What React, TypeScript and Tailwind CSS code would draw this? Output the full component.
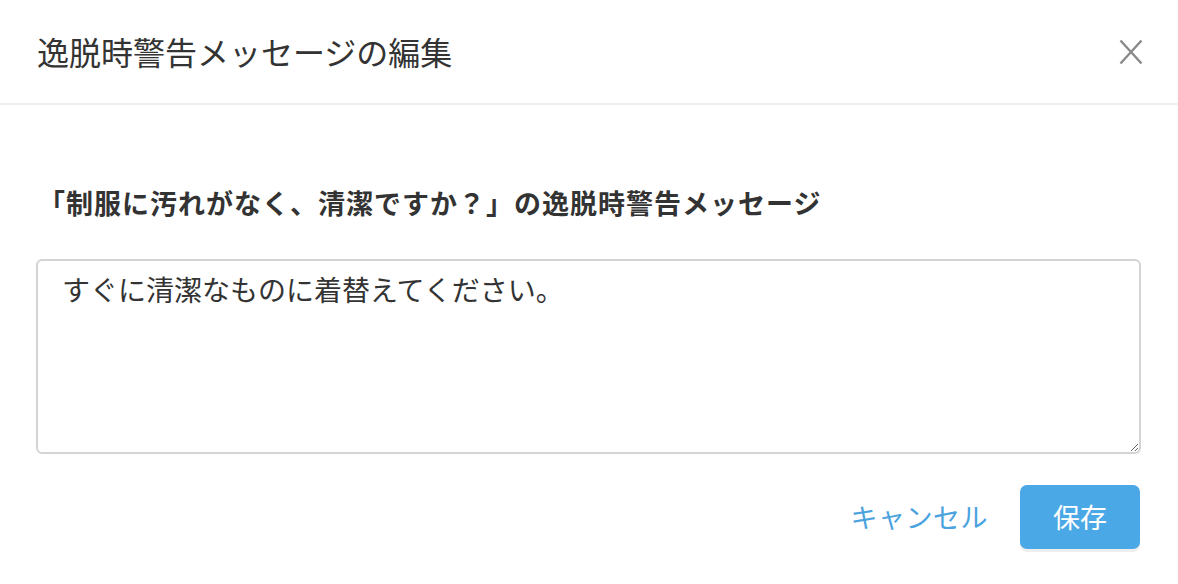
import React from "react";

export default function App() {
  return (
    <div
      className="w-[1178px] h-[584px] bg-white overflow-hidden text-[#333]"
      style={{ fontFamily: '"Noto Sans CJK JP", "Noto Sans", sans-serif' }}
    >
      <div className="h-[105px] border-b-2 border-[#eeeeee] flex items-center justify-between pl-[37px] pr-[34px]">
        <h1 className="text-[32px] leading-[40px] font-normal text-[#333] mb-[2px]">
          逸脱時警告メッセージの編集
        </h1>
        <button className="w-[26px] h-[26px] flex items-center justify-center text-[#888]" aria-label="close">
          <svg width="24" height="26" viewBox="0 0 24 26" fill="none" stroke="#8a8a8a" strokeWidth="2.4">
            <path d="M1.5 1.5 L22.5 24.5 M22.5 1.5 L1.5 24.5" />
          </svg>
        </button>
      </div>
      <div className="px-[36px] pt-[79px]">
        <div className="text-[27px] leading-[38px] font-bold text-[#333] ml-[2px] tracking-[1px]">
          「制服に汚れがなく、清潔ですか？」の逸脱時警告メッセージ
        </div>
        <textarea
          className="mt-[37px] block w-[1105px] h-[195px] border-2 border-[#d4d4d4] rounded-[6px] pl-[24px] pr-[12px] pt-[9px] text-[28px] leading-[38px] text-[#333] outline-none resize"
          style={{ fontFamily: '"Noto Sans CJK JP", "Noto Sans", sans-serif' }}
          defaultValue="すぐに清潔なものに着替えてください。"
        />
        <div className="mt-[31px] flex items-center justify-end gap-[32px] pr-[2px]">
          <button className="text-[27px] leading-[38px] text-[#4aa3df] tracking-[0.5px]">キャンセル</button>
          <button className="w-[120px] h-[64px] rounded-[7px] bg-[#4aa8e6] text-white text-[27px] leading-[38px] shadow-[0_3px_0_#eeeeee]">
            保存
          </button>
        </div>
      </div>
    </div>
  );
}
